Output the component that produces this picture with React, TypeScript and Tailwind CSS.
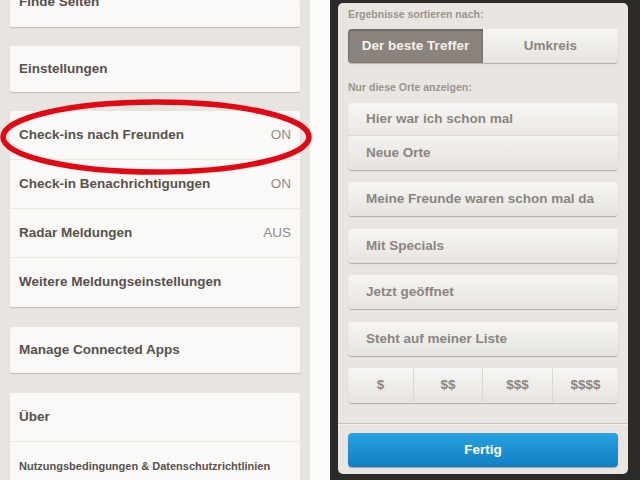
import React from "react";

const font = { fontFamily: '"Liberation Sans", Arial, sans-serif' };

function Row({ label, value, last, small }: { label: string; value?: string; last?: boolean; small?: boolean }) {
  return (
    <div className={`flex items-center justify-between h-[49px] pl-[9px] pr-[9px] ${last ? "" : "border-b border-[#ebe8e4]"}`}>
      <span className={`font-bold text-[#57524d] ${small ? "text-[11px]" : "text-[13.5px]"}`}>{label}</span>
      {value && <span className="text-[13.5px] text-[#8f8a85]">{value}</span>}
    </div>
  );
}

function Card({ children, className = "" }: { children: React.ReactNode; className?: string }) {
  return (
    <div className={`bg-[#faf9f7] rounded-[2px] shadow-[0_1px_1px_rgba(0,0,0,0.18)] ${className}`}>{children}</div>
  );
}

function Btn({ label, className = "" }: { label: string; className?: string }) {
  return (
    <div
      className={`h-[34px] shrink-0 flex items-center pl-[18px] rounded-[4px] bg-gradient-to-b from-[#f7f6f4] to-[#e6e3df] shadow-[0_1px_1px_rgba(0,0,0,0.25)] text-[13.5px] font-bold text-[#8a8580] ${className}`}
    >
      {label}
    </div>
  );
}

export default function App() {
  return (
    <div className="w-[640px] h-[480px] flex overflow-hidden relative" style={font}>
      {/* Left settings */}
      <div className="w-[310px] h-full bg-[#e8e4df] pl-[10px] pr-[10px] overflow-hidden">
        <Card className="h-[27px] flex items-start overflow-hidden">
          <span className="pl-[9px] -mt-[8px] text-[13.5px] font-bold text-[#57524d]">Finde Seiten</span>
        </Card>
        <Card className="mt-[19px] h-[46px] flex items-center">
          <span className="pl-[9px] text-[13.5px] font-bold text-[#57524d]">Einstellungen</span>
        </Card>
        <Card className="mt-[19px]">
          <Row label="Check-ins nach Freunden" value="ON" />
          <Row label="Check-in Benachrichtigungen" value="ON" />
          <Row label="Radar Meldungen" value="AUS" />
          <Row label="Weitere Meldungseinstellungen" last />
        </Card>
        <Card className="mt-[20px] h-[46px] flex items-center">
          <span className="pl-[9px] text-[13.5px] font-bold text-[#57524d]">Manage Connected Apps</span>
        </Card>
        <Card className="mt-[20px]">
          <Row label="Über" />
          <Row label="Nutzungsbedingungen & Datenschutzrichtlinien" small last />
        </Card>
      </div>

      {/* White strip */}
      <div className="w-[20px] h-full bg-[#fbfbfa]" />

      {/* Dark area with modal */}
      <div className="flex-1 h-full bg-[#2b2a28] pl-[8px] pr-[12px] pt-[3px]">
        <div className="w-[290px] h-[471px] bg-[#e9e6e1] rounded-[5px] flex flex-col px-[10px]">
          <div className="mt-[5px] text-[10.5px] font-bold text-[#9a948e] leading-[13px]">Ergebnisse sortieren nach:</div>
          <div className="mt-[8px] h-[34px] shrink-0 flex rounded-[4px] overflow-hidden shadow-[0_1px_1px_rgba(0,0,0,0.25)]">
            <div className="w-[135px] bg-[#8b837d] flex items-center justify-center text-[13.5px] font-bold text-[#f4f1ee] shadow-[inset_0_1px_3px_rgba(0,0,0,0.35)]">
              Der beste Treffer
            </div>
            <div className="flex-1 bg-gradient-to-b from-[#f7f6f4] to-[#e6e3df] flex items-center justify-center text-[13.5px] font-bold text-[#8a8580]">
              Umkreis
            </div>
          </div>
          <div className="mt-[18px] text-[10.5px] font-bold text-[#9a948e] leading-[13px]">Nur diese Orte anzeigen:</div>
          <div className="mt-[9px] shrink-0 rounded-[4px] overflow-hidden shadow-[0_1px_1px_rgba(0,0,0,0.25)]">
            <div className="h-[33px] flex items-center pl-[18px] bg-gradient-to-b from-[#f7f6f4] to-[#ebe8e4] border-b border-[#dcd8d3] text-[13.5px] font-bold text-[#8a8580]">
              Hier war ich schon mal
            </div>
            <div className="h-[34px] flex items-center pl-[18px] bg-gradient-to-b from-[#f3f1ee] to-[#e6e3df] text-[13.5px] font-bold text-[#8a8580]">
              Neue Orte
            </div>
          </div>
          <Btn label="Meine Freunde waren schon mal da" className="mt-[12px]" />
          <Btn label="Mit Specials" className="mt-[13px]" />
          <Btn label="Jetzt geöffnet" className="mt-[12px]" />
          <Btn label="Steht auf meiner Liste" className="mt-[13px]" />
          <div className="mt-[12px] h-[35px] shrink-0 flex rounded-[4px] overflow-hidden shadow-[0_1px_1px_rgba(0,0,0,0.25)] bg-gradient-to-b from-[#f7f6f4] to-[#e6e3df] text-[13.5px] font-bold text-[#8a8580]">
            <div className="w-[66px] flex items-center justify-center border-r border-[#dad6d1]">$</div>
            <div className="w-[69px] flex items-center justify-center border-r border-[#dad6d1]">$$</div>
            <div className="w-[70px] flex items-center justify-center border-r border-[#dad6d1]">$$$</div>
            <div className="flex-1 flex items-center justify-center">$$$$</div>
          </div>
          <div className="mt-[20px] -mx-[10px] h-[2px] shrink-0 bg-[#c9c4be] border-b border-[#f5f3f0]" />
          <div className="mt-[8px] h-[34px] shrink-0 rounded-[4px] bg-gradient-to-b from-[#28a3de] to-[#127ec4] shadow-[0_1px_1px_rgba(0,0,0,0.3)] flex items-center justify-center text-[13.5px] font-bold text-white">
            Fertig
          </div>
        </div>
      </div>

      {/* Red ellipse annotation */}
      <svg className="absolute left-0 top-0 pointer-events-none" width="640" height="480">
        <ellipse cx="156" cy="137" rx="153" ry="35" fill="none" stroke="#e30613" strokeWidth="5.5" />
      </svg>
    </div>
  );
}
